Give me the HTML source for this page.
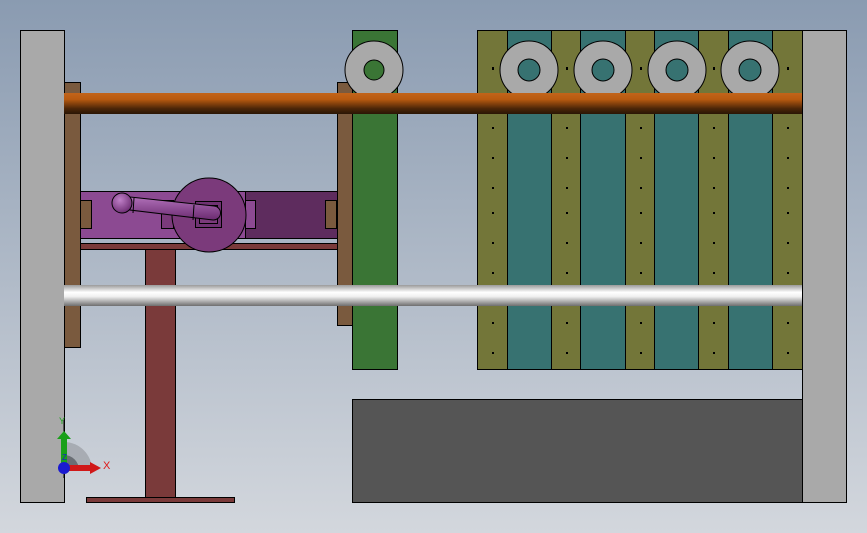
<!DOCTYPE html>
<html><head><style>html,body{margin:0;padding:0;overflow:hidden}</style></head><body>
<svg width="867" height="533" xmlns="http://www.w3.org/2000/svg" style="display:block">
<defs>
<linearGradient id="bg" x1="0" y1="0" x2="0" y2="1"><stop offset="0" stop-color="#8a9bb1"/><stop offset="1" stop-color="#d3d7dd"/></linearGradient>
<linearGradient id="or" x1="0" y1="0" x2="0" y2="1"><stop offset="0" stop-color="#c2641a"/><stop offset="0.3" stop-color="#b85a10"/><stop offset="0.75" stop-color="#4a2508"/><stop offset="1" stop-color="#2a1505"/></linearGradient>
<linearGradient id="wh" x1="0" y1="0" x2="0" y2="1"><stop offset="0" stop-color="#9a9a9a"/><stop offset="0.35" stop-color="#ffffff"/><stop offset="0.55" stop-color="#f0f0f0"/><stop offset="1" stop-color="#6e6e6e"/></linearGradient>
<linearGradient id="hd" x1="0" y1="0" x2="0" y2="1"><stop offset="0" stop-color="#b070b8"/><stop offset="1" stop-color="#6a2a70"/></linearGradient>
<radialGradient id="ball" cx="0.4" cy="0.35" r="0.7"><stop offset="0" stop-color="#c080c8"/><stop offset="1" stop-color="#6a2a70"/></radialGradient>
</defs>
<rect width="867" height="533" fill="url(#bg)"/>
<g stroke="#000" stroke-width="1">
<rect x="20.5" y="30.5" width="44" height="472" fill="#a9a9a9"/>
<rect x="802.5" y="30.5" width="44" height="472" fill="#a9a9a9"/>
<rect x="64.5" y="82.5" width="16" height="265" fill="#7a5a3e"/>
<rect x="337.5" y="82.5" width="15" height="243" fill="#7a5a3e"/>
<rect x="352.5" y="30.5" width="45" height="339" fill="#3a7535"/>
<rect x="477.5" y="30.5" width="325" height="339" fill="#737639"/>
<rect x="507.5" y="30.5" width="44" height="339" fill="#377271"/>
<rect x="580.5" y="30.5" width="45" height="339" fill="#377271"/>
<rect x="654.5" y="30.5" width="44" height="339" fill="#377271"/>
<rect x="728.5" y="30.5" width="44" height="339" fill="#377271"/>
<rect x="352.5" y="399.5" width="450" height="103" fill="#555555"/>
<rect x="145.5" y="249.5" width="30" height="249" fill="#7a3a3a"/>
<rect x="86.5" y="497.5" width="148" height="5" fill="#7a3a3a"/>
<rect x="80.5" y="238.5" width="257" height="5" fill="#a9b5c5"/>
<rect x="80.5" y="243.5" width="257" height="6" fill="#7a3a3a"/>
<rect x="80.5" y="191.5" width="165" height="47" fill="#8c4a92"/>
<rect x="245.5" y="191.5" width="92" height="47" fill="#5e2c5e"/>
<rect x="80.5" y="200.5" width="11" height="28" fill="#7a5a3e"/>
<rect x="325.5" y="200.5" width="11" height="28" fill="#7a5a3e"/>
<rect x="161.5" y="200.5" width="12" height="28" fill="#7b3a7b"/>
<rect x="245.5" y="200.5" width="10" height="28" fill="#8c4a92"/>
<circle cx="209" cy="215" r="37" fill="#7b3a7b"/>
<rect x="195.5" y="201.5" width="26" height="26" fill="#6f3272"/>
<rect x="199.5" y="205.5" width="18" height="18" fill="#7b3a7b"/>
</g>
<g stroke="#000" stroke-width="1">
<path d="M130 197 L214 206 A6 6 0 0 1 213 220 L130 210 Z" fill="url(#hd)"/>
<line x1="134" y1="198" x2="133" y2="213"/>
<line x1="194" y1="205" x2="193" y2="220"/>
<circle cx="122" cy="203" r="10" fill="url(#ball)"/>
</g>
<g stroke="#000" stroke-width="1">
<circle cx="374" cy="70" r="29" fill="#a9a9a9"/><circle cx="374" cy="70" r="10" fill="#3a7535"/>
<circle cx="529" cy="70" r="29" fill="#a9a9a9"/><circle cx="529" cy="70" r="11" fill="#377271"/>
<circle cx="603" cy="70" r="29" fill="#a9a9a9"/><circle cx="603" cy="70" r="11" fill="#377271"/>
<circle cx="677" cy="70" r="29" fill="#a9a9a9"/><circle cx="677" cy="70" r="11" fill="#377271"/>
<circle cx="750" cy="70" r="29" fill="#a9a9a9"/><circle cx="750" cy="70" r="11" fill="#377271"/>
</g>
<rect x="64" y="93" width="738" height="21" fill="url(#or)"/>
<rect x="64" y="285" width="738" height="21" fill="url(#wh)"/>
<g fill="#000">
<g id="d"><rect x="492" y="67" width="2" height="3"/><rect x="492" y="127" width="2" height="2"/><rect x="492" y="157" width="2" height="2"/><rect x="492" y="187" width="2" height="2"/><rect x="492" y="212" width="2" height="2"/><rect x="492" y="242" width="2" height="2"/><rect x="492" y="272" width="2" height="2"/><rect x="492" y="322" width="2" height="2"/><rect x="492" y="352" width="2" height="2"/></g>
<use href="#d" x="74"/><use href="#d" x="148"/><use href="#d" x="221"/><use href="#d" x="295"/>
</g>
<path d="M64 442 A28 28 0 0 1 92 470 L64 470 Z" fill="#9a9ea4" opacity="0.7"/>
<path d="M64 455 A15 15 0 0 1 79 470 L64 470 Z" fill="#5a5e64" opacity="0.8"/>
<line x1="64" y1="420" x2="64" y2="478" stroke="#000"/>
<rect x="61" y="438" width="6" height="28" fill="#19a019"/>
<path d="M57 439 L64 431 L71 439 Z" fill="#19a019"/>
<rect x="66" y="465" width="26" height="6" fill="#d01818"/>
<path d="M90 462 L101 468 L90 474 Z" fill="#d01818"/>
<circle cx="64" cy="468" r="6" fill="#1a1ad0"/>
<text x="59" y="424" font-family="Liberation Sans" font-size="9" fill="#19a019">Y</text>
<text x="103" y="469" font-family="Liberation Sans" font-size="11" fill="#e01818">X</text>
<text x="62" y="460" font-family="Liberation Sans" font-size="8" fill="#1a1ad0">Z</text>
</svg>
</body></html>
